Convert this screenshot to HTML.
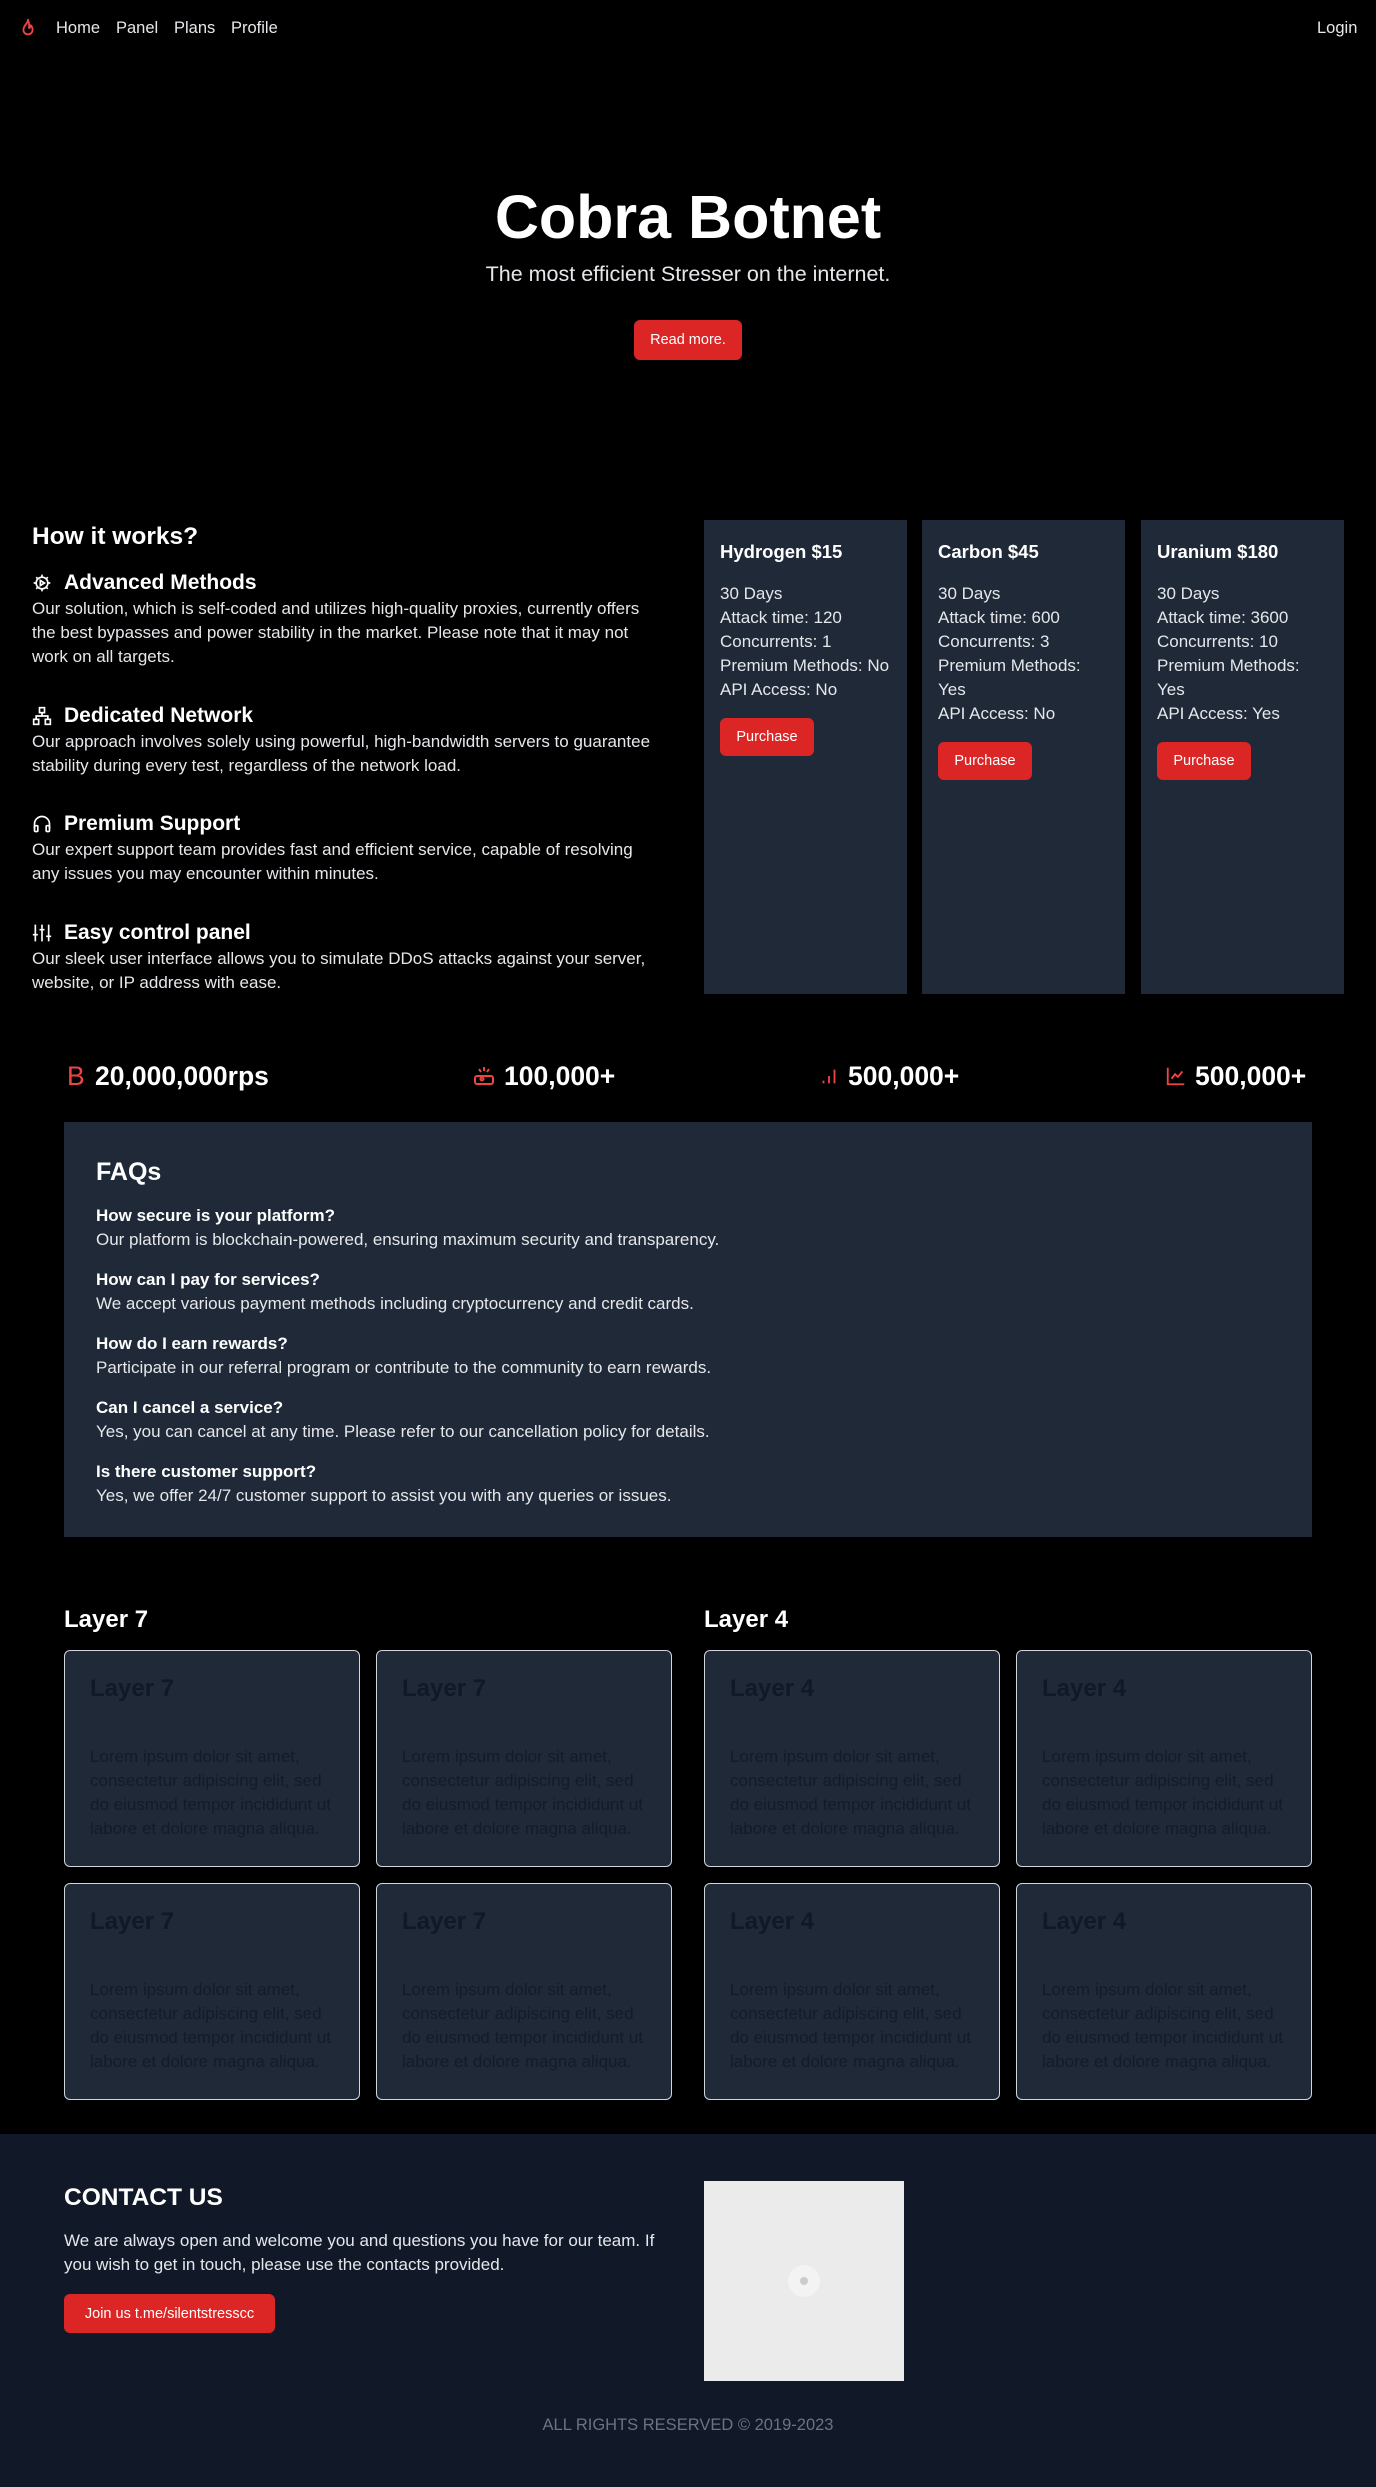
<!DOCTYPE html>
<html><head><meta charset="utf-8">
<style>
*{margin:0;padding:0;box-sizing:border-box}
body{width:1376px;height:2487px;background:#000;color:#e5e7eb;font-family:"Liberation Sans",sans-serif;font-size:17px;line-height:24px;position:relative;overflow:hidden}
.abs{position:absolute}
nav a{position:absolute;top:16px;color:#e5e7eb;font-size:16.5px;text-decoration:none}
.btn{position:absolute;background:#dc2626;color:#fff;border-radius:6px;font-size:14.5px;display:flex;align-items:center;justify-content:center}
h3{font-size:21px;font-weight:bold;color:#fff;line-height:28px}
.feat{position:absolute;left:32px;width:630px}
.feat .t{display:flex;align-items:center;gap:12px;height:28px}
.card{position:absolute;top:520px;width:203px;height:474px;background:#1f2937;padding:18px 10px 20px 16px}
.card h4{font-size:18.5px;font-weight:bold;color:#fff;line-height:28px;margin-bottom:16px}
.card p{color:#e5e7eb}
.card .btn{position:static;width:94px;height:38px;margin-top:16px}
.stat{position:absolute;top:1060px;display:flex;align-items:center;gap:8px;font-size:26.5px;font-weight:bold;color:#fff;line-height:32px}
.faq{position:absolute;left:64px;top:1122px;width:1248px;height:415px;background:#1f2937;padding:34px 32px}
.faq h2{font-size:25px;font-weight:bold;color:#fff;line-height:32px;margin-bottom:16px}
.faq .q{font-weight:bold;color:#fff}
.faq .a{margin-bottom:16px}
.lc{position:absolute;width:296px;height:217px;background:#1f2937;border:1px solid #d1d5db;border-radius:6px;padding:22px 25px}
.lc h5{font-size:24px;font-weight:600;color:#111827;line-height:32px;margin-bottom:40px}
.lc p{color:#111827;opacity:.8}
.lh{position:absolute;top:1604px;font-size:24px;font-weight:bold;color:#fff;line-height:32px}
</style></head><body>
<nav>
<svg class="abs" style="left:17px;top:16px" width="22" height="24" viewBox="0 0 24 24" fill="none" stroke="#ef4444" stroke-width="2" stroke-linecap="round" stroke-linejoin="round"><path d="M12 3c0 4-5 6-5 11a5 5 0 0 0 10 0c0-2-1-4-2-5 0 2-1 3-2 3 1-3 0-6-1-9z"/></svg>
<a style="left:56px">Home</a><a style="left:116px">Panel</a><a style="left:174px">Plans</a><a style="left:231px">Profile</a>
<a style="left:1317px">Login</a>
</nav>
<div class="abs" style="left:0;width:1376px;top:178px;text-align:center;font-size:61px;font-weight:bold;color:#fff;line-height:78px">Cobra Botnet</div>
<div class="abs" style="left:0;width:1376px;top:260px;text-align:center;font-size:21.5px;line-height:28px;color:#e5e7eb">The most efficient Stresser on the internet.</div>
<div class="btn" style="left:634px;top:320px;width:108px;height:40px">Read more.</div>

<div class="abs" style="left:32px;top:521px;font-size:24.5px;font-weight:bold;color:#fff;line-height:32px">How it works?</div>
<div class="feat" style="top:569px"><div class="t"><svg width="20" height="20" viewBox="0 0 24 24" fill="none" stroke="#fff" stroke-width="2"><circle cx="12" cy="12" r="7"/><path d="M12 2v3M12 19v3M2 12h3M19 12h3M5 5l2 2M17 17l2 2M5 19l2-2M17 7l2-2"/><path d="M10 9l5 3-5 3z"/></svg><h3>Advanced Methods</h3></div><p>Our solution, which is self-coded and utilizes high-quality proxies, currently offers the best bypasses and power stability in the market. Please note that it may not work on all targets.</p></div>
<div class="feat" style="top:702px"><div class="t"><svg width="20" height="20" viewBox="0 0 24 24" fill="none" stroke="#fff" stroke-width="2"><rect x="9" y="2" width="6" height="6"/><rect x="2" y="16" width="6" height="6"/><rect x="16" y="16" width="6" height="6"/><path d="M12 8v4M5 16v-4h14v4"/></svg><h3>Dedicated Network</h3></div><p>Our approach involves solely using powerful, high-bandwidth servers to guarantee stability during every test, regardless of the network load.</p></div>
<div class="feat" style="top:810px"><div class="t"><svg width="20" height="20" viewBox="0 0 24 24" fill="none" stroke="#fff" stroke-width="2"><path d="M3 18v-6a9 9 0 0 1 18 0v6"/><rect x="3" y="14" width="4" height="7" rx="1"/><rect x="17" y="14" width="4" height="7" rx="1"/></svg><h3>Premium Support</h3></div><p>Our expert support team provides fast and efficient service, capable of resolving any issues you may encounter within minutes.</p></div>
<div class="feat" style="top:919px"><div class="t"><svg width="20" height="20" viewBox="0 0 24 24" fill="none" stroke="#fff" stroke-width="2"><path d="M4 2v20M12 2v20M20 2v20M1 14h6M9 8h6M17 16h6"/></svg><h3>Easy control panel</h3></div><p>Our sleek user interface allows you to simulate DDoS attacks against your server, website, or IP address with ease.</p></div>

<div class="card" style="left:704px"><h4>Hydrogen $15</h4><p>30 Days<br>Attack time: 120<br>Concurrents: 1<br>Premium Methods: No<br>API Access: No</p><div class="btn">Purchase</div></div>
<div class="card" style="left:922px"><h4>Carbon $45</h4><p>30 Days<br>Attack time: 600<br>Concurrents: 3<br>Premium Methods:<br>Yes<br>API Access: No</p><div class="btn">Purchase</div></div>
<div class="card" style="left:1141px"><h4>Uranium $180</h4><p>30 Days<br>Attack time: 3600<br>Concurrents: 10<br>Premium Methods:<br>Yes<br>API Access: Yes</p><div class="btn">Purchase</div></div>

<div class="stat" style="left:67px"><span style="color:#ef4444;font-weight:normal;width:20px">B</span>20,000,000rps</div>
<div class="stat" style="left:472px"><svg width="24" height="24" viewBox="0 0 24 24" fill="none" stroke="#ef4444" stroke-width="2"><rect x="3" y="12" width="18" height="8" rx="2"/><circle cx="10" cy="15" r="1.5"/><path d="M12 3v4M7 5l2 3M17 5l-2 3"/></svg>100,000+</div>
<div class="stat" style="left:818px"><svg width="22" height="24" viewBox="0 0 24 24" fill="none" stroke="#ef4444" stroke-width="2"><path d="M6 20v-3M12 20v-8M18 20V5"/></svg>500,000+</div>
<div class="stat" style="left:1165px"><svg width="22" height="24" viewBox="0 0 24 24" fill="none" stroke="#ef4444" stroke-width="2"><path d="M3 3v18h18"/><path d="M7 15l4-5 3 3 5-6"/></svg>500,000+</div>

<div class="faq"><h2>FAQs</h2>
<p class="q">How secure is your platform?</p><p class="a">Our platform is blockchain-powered, ensuring maximum security and transparency.</p>
<p class="q">How can I pay for services?</p><p class="a">We accept various payment methods including cryptocurrency and credit cards.</p>
<p class="q">How do I earn rewards?</p><p class="a">Participate in our referral program or contribute to the community to earn rewards.</p>
<p class="q">Can I cancel a service?</p><p class="a">Yes, you can cancel at any time. Please refer to our cancellation policy for details.</p>
<p class="q">Is there customer support?</p><p class="a">Yes, we offer 24/7 customer support to assist you with any queries or issues.</p>
</div>

<div class="lh" style="left:64px">Layer 7</div>
<div class="lh" style="left:704px">Layer 4</div>
<div class="lc" style="left:64px;top:1650px"><h5>Layer 7</h5><p>Lorem ipsum dolor sit amet, consectetur adipiscing elit, sed do eiusmod tempor incididunt ut labore et dolore magna aliqua.</p></div>
<div class="lc" style="left:376px;top:1650px"><h5>Layer 7</h5><p>Lorem ipsum dolor sit amet, consectetur adipiscing elit, sed do eiusmod tempor incididunt ut labore et dolore magna aliqua.</p></div>
<div class="lc" style="left:64px;top:1883px"><h5>Layer 7</h5><p>Lorem ipsum dolor sit amet, consectetur adipiscing elit, sed do eiusmod tempor incididunt ut labore et dolore magna aliqua.</p></div>
<div class="lc" style="left:376px;top:1883px"><h5>Layer 7</h5><p>Lorem ipsum dolor sit amet, consectetur adipiscing elit, sed do eiusmod tempor incididunt ut labore et dolore magna aliqua.</p></div>
<div class="lc" style="left:704px;top:1650px"><h5>Layer 4</h5><p>Lorem ipsum dolor sit amet, consectetur adipiscing elit, sed do eiusmod tempor incididunt ut labore et dolore magna aliqua.</p></div>
<div class="lc" style="left:1016px;top:1650px"><h5>Layer 4</h5><p>Lorem ipsum dolor sit amet, consectetur adipiscing elit, sed do eiusmod tempor incididunt ut labore et dolore magna aliqua.</p></div>
<div class="lc" style="left:704px;top:1883px"><h5>Layer 4</h5><p>Lorem ipsum dolor sit amet, consectetur adipiscing elit, sed do eiusmod tempor incididunt ut labore et dolore magna aliqua.</p></div>
<div class="lc" style="left:1016px;top:1883px"><h5>Layer 4</h5><p>Lorem ipsum dolor sit amet, consectetur adipiscing elit, sed do eiusmod tempor incididunt ut labore et dolore magna aliqua.</p></div>

<div class="abs" style="left:0;top:2134px;width:1376px;height:353px;background:#111827"></div>
<div class="abs" style="left:64px;top:2182px;font-size:24.5px;font-weight:bold;color:#fff;line-height:32px">CONTACT US</div>
<div class="abs" style="left:64px;top:2229px;width:600px;color:#e5e7eb">We are always open and welcome you and questions you have for our team. If you wish to get in touch, please use the contacts provided.</div>
<div class="btn" style="left:64px;top:2294px;width:211px;height:39px">Join us t.me/silentstresscc</div>
<div class="abs" style="left:704px;top:2181px;width:200px;height:200px;background:#ebebeb"><div style="position:absolute;left:84px;top:84px;width:32px;height:32px;border-radius:50%;background:#f3f3f3"></div><div style="position:absolute;left:96px;top:96px;width:8px;height:8px;border-radius:50%;background:#ccc"></div></div>
<div class="abs" style="left:0;width:1376px;top:2413px;text-align:center;color:#6b7280;font-size:16.5px">ALL RIGHTS RESERVED © 2019-2023</div>
</body></html>
